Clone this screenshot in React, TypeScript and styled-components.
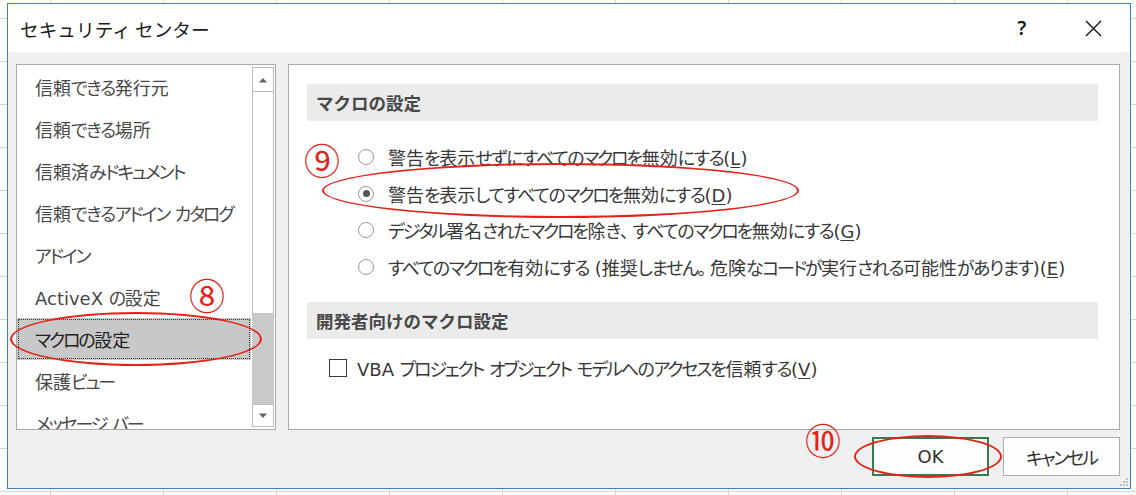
import React from 'react';
import styled, { createGlobalStyle, css } from 'styled-components';

const GlobalStyle = createGlobalStyle`
  html, body { margin: 0; padding: 0; }
  body {
    width: 1136px; height: 495px; overflow: hidden;
    font-family: "DejaVu Sans", "Noto Sans CJK JP", sans-serif;
  }
  * { box-sizing: border-box; }
`;

const Page = styled.div`
  width: 1136px;
  height: 495px;
  padding: 3px 5px 0 7px;
  background-color: #fff;
  background-image:
    linear-gradient(#d6d6d6 1px, transparent 1px),
    linear-gradient(90deg, #d6d6d6 1px, transparent 1px);
  background-size: 113px 43px;
  background-position: 50px 18px;
`;

const Dialog = styled.div`
  position: relative;
  width: 1124px;
  height: 486px;
  border: 1px solid #3f7fbf;
  background: #f0f0f0;
  display: flex;
  flex-direction: column;
`;

const TitleBar = styled.div`
  flex: none;
  height: 48px;
  background: #fff;
  display: flex;
  align-items: center;
  padding-left: 12px;
`;

const Title = styled.div`
  flex: 1;
  font-family: "Noto Sans CJK JP", sans-serif;
  font-size: 18.67px;
  color: #1b1b1b;
  white-space: nowrap;
`;

const CaptionGroup = styled.div`
  display: flex;
  gap: 25px;
  margin-right: 14px;
  height: 100%;
`;

const CaptionButton = styled.div`
  width: 46px;
  height: 100%;
  display: flex;
  align-items: center;
  justify-content: center;
  font-family: "Noto Sans", sans-serif;
  font-size: 19px;
  font-weight: 600;
  color: #111;
`;

const Body = styled.div`
  flex: 1;
  display: flex;
  flex-direction: column;
  padding: 12px 10px 0 8px;
`;

const Panes = styled.div`
  display: flex;
  gap: 12px;
  height: 366px;
`;

const ListBox = styled.div`
  width: 260px;
  border: 1px solid #a9a9a9;
  background: #fff;
  display: flex;
`;

const Items = styled.div`
  flex: 1;
  padding-top: 1px;
  overflow: hidden;
  display: flex;
  flex-direction: column;
`;

const jpText = css`
  font-size: 18px;
  font-feature-settings: "palt";
  white-space: nowrap;
`;

type KanaKind = 'hira' | 'kata' | 'punct';

const Kana = styled.span<{ $kind: KanaKind }>`
  letter-spacing: ${(p) =>
    p.$kind === 'kata' ? '-0.12em' : p.$kind === 'hira' ? '-0.08em' : '-0.3em'};
  ${(p) => p.$kind === 'punct' && 'font-feature-settings: normal;'}
`;

const Label = styled.span`
  white-space: pre;
`;

const Item = styled.div<{ $selected?: boolean }>`
  ${jpText};
  flex: none;
  height: 42px;
  display: flex;
  align-items: center;
  padding-left: 18px;
  color: #484848;
  ${(p) =>
    p.$selected &&
    css`
      background: #c8c8c8;
      color: #222;
      outline: 1px dotted #333;
      outline-offset: -2px;
    `}
`;

const ScrollBar = styled.div`
  width: 24px;
  display: flex;
  flex-direction: column;
  padding: 2px 1px 2px 1px;
  background: #fff;
`;

const ArrowButton = styled.div<{ $h: number }>`
  flex: none;
  height: ${(p) => p.$h}px;
  border: 1px solid #bcbcbc;
  background: #fff;
  display: flex;
  align-items: center;
  justify-content: center;
`;

const Thumb = styled.div`
  flex: none;
  height: 221px;
  border-left: 1px solid #bcbcbc;
  border-right: 1px solid #bcbcbc;
  background: #fff;
`;

const Track = styled.div`
  flex: 1;
  background: #c9c9c9;
`;

const Panel = styled.div`
  flex: 1;
  border: 1px solid #a9a9a9;
  background: #fff;
  padding: 19px 21px 0 18px;
  display: flex;
  flex-direction: column;
`;

const SectionHeader = styled.div<{ $gap: number }>`
  flex: none;
  height: 37px;
  margin-top: ${(p) => p.$gap}px;
  background: #ebebeb;
  display: flex;
  align-items: center;
  padding-left: 9px;
  font-family: "Noto Sans CJK JP", sans-serif;
  font-size: 17.5px;
  font-weight: 700;
  color: #484848;
`;

const OptionList = styled.div`
  margin-top: 18px;
  display: flex;
  flex-direction: column;
`;

const RadioRow = styled.div`
  ${jpText};
  height: 36.5px;
  display: flex;
  align-items: center;
  padding-left: 51px;
  gap: 14px;
  color: #383838;
`;

const Radio = styled.span<{ $checked?: boolean }>`
  flex: none;
  width: 16px;
  height: 16px;
  border-radius: 50%;
  border: 1px solid #9a9a9a;
  background: #fff;
  display: flex;
  align-items: center;
  justify-content: center;
  &::after {
    content: '';
    width: 7px;
    height: 7px;
    border-radius: 50%;
    background: ${(p) => (p.$checked ? '#555' : 'transparent')};
  }
`;

const CheckRow = styled.div`
  ${jpText};
  margin-top: 11px;
  height: 36px;
  display: flex;
  align-items: center;
  padding-left: 22px;
  gap: 10px;
  color: #383838;
`;

const CheckBox = styled.span`
  flex: none;
  width: 18px;
  height: 18px;
  border: 1px solid #3a3a3a;
  background: #fff;
`;

const Key = styled.span`
  text-decoration: underline;
  text-underline-offset: 2px;
`;

const ButtonRow = styled.div`
  margin-top: 7px;
  display: flex;
  justify-content: flex-end;
  gap: 14px;
`;

const Button = styled.div<{ $primary?: boolean }>`
  ${jpText};
  width: 117px;
  height: 39px;
  display: flex;
  align-items: center;
  justify-content: center;
  background: #fdfdfd;
  color: #333;
  border: ${(p) => (p.$primary ? '2px solid #367c4a' : '1px solid #adadad')};
`;

const Grip = styled.svg`
  position: absolute;
  right: 1px;
  bottom: 1px;
`;

const Ellipse = styled.div<{ $x: number; $y: number; $w: number; $h: number }>`
  position: absolute;
  left: ${(p) => p.$x}px;
  top: ${(p) => p.$y}px;
  width: ${(p) => p.$w}px;
  height: ${(p) => p.$h}px;
  border: 2px solid #e2231a;
  border-radius: 50%;
  pointer-events: none;
`;

const Marker = styled.span<{ $x: number; $y: number }>`
  position: absolute;
  left: ${(p) => p.$x}px;
  top: ${(p) => p.$y}px;
  font-family: "Noto Sans CJK JP", sans-serif;
  font-size: 36px;
  line-height: 1;
  color: #e2231a;
`;

const ArrowUp = () => (
  <svg width="10" height="6" viewBox="0 0 10 6">
    <path d="M1 5.5 L5 1 L9 5.5 Z" fill="#606060" />
  </svg>
);
const ArrowDown = () => (
  <svg width="10" height="6" viewBox="0 0 10 6">
    <path d="M1 0.5 L5 5 L9 0.5 Z" fill="#606060" />
  </svg>
);

const KATA = /^[\u30a0-\u30ff]+$/;
const HIRA = /^[\u3040-\u309f]+$/;
const PUNCT = /^[\u3000-\u303f]+$/;

function jp(text: string) {
  return text
    .split(/([\u30a0-\u30ff]+|[\u3040-\u309f]+|[\u3000-\u303f]+)/)
    .filter((s) => s.length > 0)
    .map((s, i) => {
      if (KATA.test(s)) return <Kana key={i} $kind="kata">{s}</Kana>;
      if (HIRA.test(s)) return <Kana key={i} $kind="hira">{s}</Kana>;
      if (PUNCT.test(s)) return <Kana key={i} $kind="punct">{s}</Kana>;
      return <React.Fragment key={i}>{s}</React.Fragment>;
    });
}

const items = [
  '信頼できる発行元',
  '信頼できる場所',
  '信頼済みドキュメント',
  '信頼できるアドイン カタログ',
  'アドイン',
  'ActiveX の設定',
  'マクロの設定',
  '保護ビュー',
  'メッセージ バー',
];

const options: { text: string; key: string; checked?: boolean }[] = [
  { text: '警告を表示せずにすべてのマクロを無効にする', key: 'L' },
  { text: '警告を表示してすべてのマクロを無効にする', key: 'D', checked: true },
  { text: 'デジタル署名されたマクロを除き、すべてのマクロを無効にする', key: 'G' },
  { text: 'すべてのマクロを有効にする (推奨しません。危険なコードが実行される可能性があります)', key: 'E' },
];

export default function App() {
  return (
    <Page>
      <GlobalStyle />
      <Dialog>
        <TitleBar>
          <Title>セキュリティ センター</Title>
          <CaptionGroup>
            <CaptionButton>?</CaptionButton>
            <CaptionButton>
              <svg width="17" height="17" viewBox="0 0 17 17">
                <path d="M1 1 L16 16 M16 1 L1 16" stroke="#111" strokeWidth="1.4" />
              </svg>
            </CaptionButton>
          </CaptionGroup>
        </TitleBar>
        <Body>
          <Panes>
            <ListBox>
              <Items>
                {items.map((t) => (
                  <Item key={t} $selected={t === 'マクロの設定'}>
                    <Label>{jp(t)}</Label>
                  </Item>
                ))}
              </Items>
              <ScrollBar>
                <ArrowButton $h={25}>
                  <ArrowUp />
                </ArrowButton>
                <Thumb />
                <Track />
                <ArrowButton $h={23}>
                  <ArrowDown />
                </ArrowButton>
              </ScrollBar>
            </ListBox>
            <Panel>
              <SectionHeader $gap={0}>マクロの設定</SectionHeader>
              <OptionList>
                {options.map((o) => (
                  <RadioRow key={o.key}>
                    <Radio $checked={o.checked} />
                    <Label>
                      {jp(o.text)}(<Key>{o.key}</Key>)
                    </Label>
                  </RadioRow>
                ))}
              </OptionList>
              <SectionHeader $gap={17}>開発者向けのマクロ設定</SectionHeader>
              <CheckRow>
                <CheckBox />
                <Label>
                  {jp('VBA プロジェクト オブジェクト モデルへのアクセスを信頼する')}(<Key>V</Key>)
                </Label>
              </CheckRow>
            </Panel>
          </Panes>
          <ButtonRow>
            <Button $primary>OK</Button>
            <Button>
              <Label>{jp('キャンセル')}</Label>
            </Button>
          </ButtonRow>
        </Body>
        <Grip width="10" height="10" viewBox="0 0 10 10">
          <g fill="#bdbdbd">
            <rect x="7" y="1" width="2" height="2" />
            <rect x="4" y="4" width="2" height="2" />
            <rect x="7" y="4" width="2" height="2" />
            <rect x="1" y="7" width="2" height="2" />
            <rect x="4" y="7" width="2" height="2" />
            <rect x="7" y="7" width="2" height="2" />
          </g>
        </Grip>
        <Ellipse $x={2} $y={308} $w={252} $h={54} />
        <Ellipse $x={314} $y={159} $w={477} $h={55} />
        <Ellipse $x={846} $y={431} $w={148} $h={43} />
        <Marker $x={181} $y={272}>⑧</Marker>
        <Marker $x={296} $y={137}>⑨</Marker>
        <Marker $x={797} $y={417}>⑩</Marker>
      </Dialog>
    </Page>
  );
}
